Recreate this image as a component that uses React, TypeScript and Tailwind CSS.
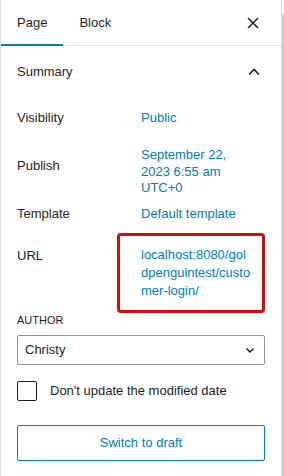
import React from 'react';

const BLUE = 'text-[#007cba]';

function CloseIcon() {
  return (
    <svg width="24" height="24" viewBox="0 0 24 24" fill="none">
      <path d="M7 7l10 10M17 7L7 17" stroke="#1e1e1e" strokeWidth="1.5" />
    </svg>
  );
}

function ChevronUp() {
  return (
    <svg width="24" height="24" viewBox="0 0 24 24" fill="none">
      <path d="M7 14.5l5-5 5 5" stroke="#1e1e1e" strokeWidth="1.6" />
    </svg>
  );
}

function ChevronDown() {
  return (
    <svg width="12" height="12" viewBox="0 0 12 12" fill="none">
      <path d="M2.5 4.5L6 8l3.5-3.5" stroke="#1e1e1e" strokeWidth="1.5" />
    </svg>
  );
}

type RowProps = { label: string; children: React.ReactNode; className?: string };

function Row({ label, children, className }: RowProps) {
  return (
    <div className={`flex items-start ${className ?? ''}`}>
      <div className="w-[124px] shrink-0 leading-5">{label}</div>
      <div className={`${BLUE} leading-5`}>{children}</div>
    </div>
  );
}

export default function App() {
  return (
    <div
      className="w-[284px] h-[476px] bg-white flex overflow-hidden text-[13px] text-[#1e1e1e]"
      style={{ fontFamily: '"Liberation Sans", Arial, sans-serif' }}
    >
      <div className="w-[282px] h-full border-l border-r border-[#e0e0e0] flex flex-col">
        {/* tabs */}
        <div className="h-[46px] flex shrink-0 shadow-[inset_0_-1px_0_#e0e0e0]">
          <button className="px-4 h-full flex items-center shadow-[inset_0_-2px_0_#007cba]">Page</button>
          <button className="px-4 h-full flex items-center">Block</button>
          <button className="ml-auto mr-[4px] w-12 h-full flex items-center justify-center">
            <CloseIcon />
          </button>
        </div>

        {/* summary panel */}
        <div className="h-[52px] flex items-center pl-4 pr-[15px] shrink-0">
          <span className="font-medium">Summary</span>
          <span className="ml-auto">
            <ChevronUp />
          </span>
        </div>

        <div className="px-4 flex flex-col">
          <Row label="Visibility" className="mt-[10px]">
            Public
          </Row>

          <div className="flex items-start mt-[19px]">
            <div className="w-[124px] shrink-0 leading-5 mt-[9px]">Publish</div>
            <div className={`${BLUE} leading-[16.5px]`}>
              <span className="block">September 22,</span>
              <span className="block">2023 6:55 am</span>
              <span className="block">UTC+0</span>
            </div>
          </div>

          <Row label="Template" className="mt-[7.5px]">
            Default template
          </Row>

          <div className="flex items-start mt-[9px]">
            <div className="w-[100px] shrink-0 leading-5 mt-[13px]">URL</div>
            <div className="w-[150px] h-[80px] border-[3px] border-[#d20b0b] rounded-[4px] pl-[21px] pt-[10px]">
              <div className={`${BLUE} leading-[18px]`}>
                <span className="block">localhost:8080/gol</span>
                <span className="block">dpenguintest/custo</span>
                <span className="block">mer-login/</span>
              </div>
            </div>
          </div>

          <div className="text-[11px] font-medium uppercase leading-[15px]">Author</div>

          <div className="mt-[7px] h-[30px] border border-[#949494] rounded-[2px] flex items-center pl-[7px] pr-[8px]">
            <span>Christy</span>
            <span className="ml-auto">
              <ChevronDown />
            </span>
          </div>

          <label className="mt-[16px] flex items-center h-[20px]">
            <span className="w-[20px] h-[20px] border-[1.5px] border-[#1e1e1e] rounded-[2px] shrink-0" />
            <span className="ml-[13px]">Don't update the modified date</span>
          </label>

          <button className={`mt-[24px] h-[36px] border border-[#007cba] rounded-[2px] ${BLUE} flex items-center justify-center`}>
            Switch to draft
          </button>
        </div>
      </div>
      <div className="w-[2px] h-full pt-[14px]">
        <div className="w-full h-full bg-[#cdcdcd]" />
      </div>
    </div>
  );
}
